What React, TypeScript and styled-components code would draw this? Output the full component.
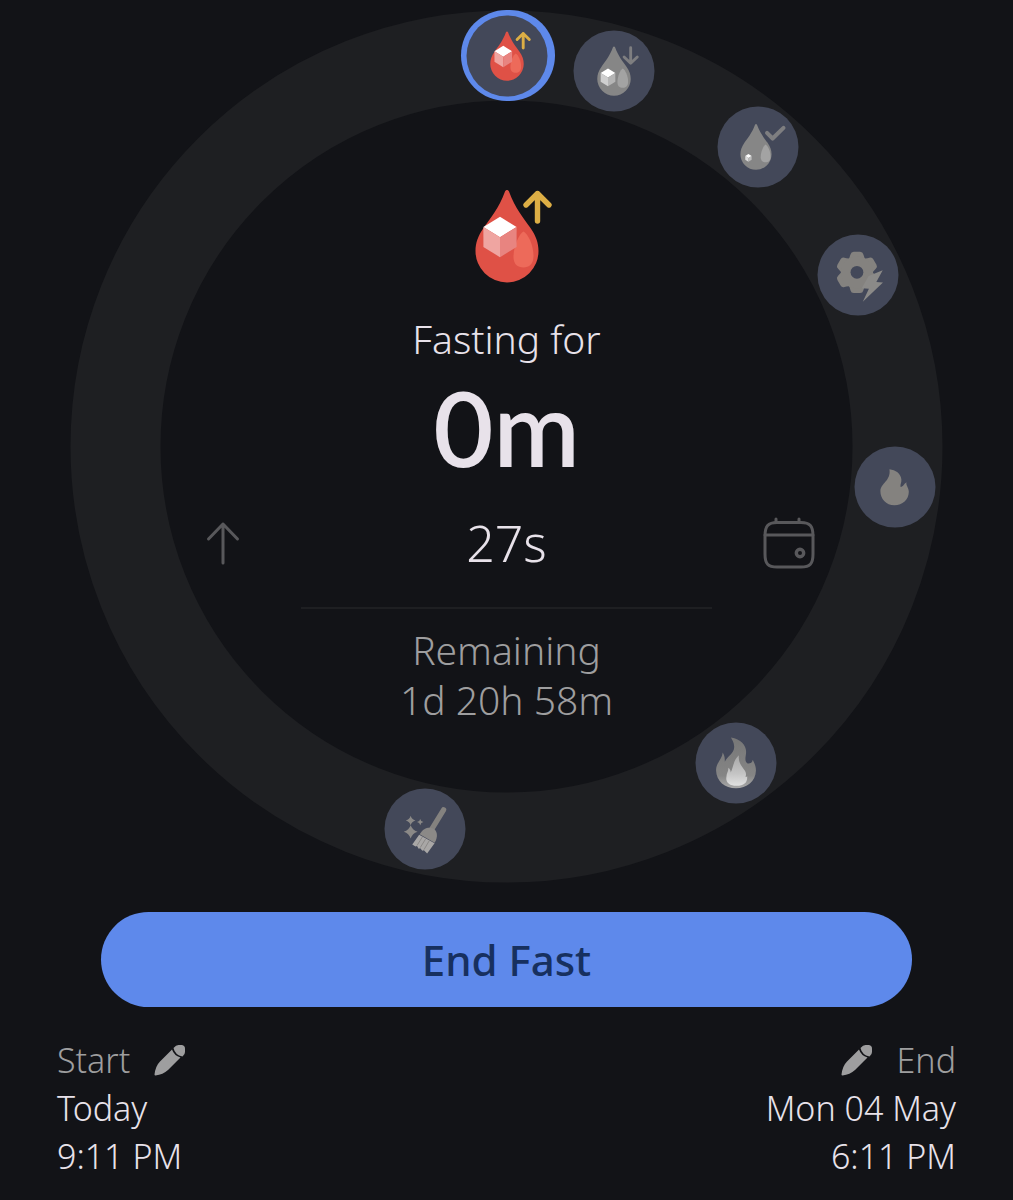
import React from "react";
import styled, { createGlobalStyle } from "styled-components";

const color = {
  page: "#121317",
  track: "#1e1f22",
  badge: "#434859",
  accent: "#5e89eb",
  onAccent: "#17305f",
  text: "#e8e2ea",
  muted: "#9e9e9f",
  faint: "#58585b",
  icon: "#858585",
};

const FAST_HOURS = 45;
const DIAL = 873;
const TRACK = 90;
const ORBIT = 391;

const GlobalStyle = createGlobalStyle`
  * { box-sizing: border-box; }
  body {
    margin: 0;
    background: ${color.page};
    color: ${color.text};
    font-family: "Noto Sans", "Open Sans", sans-serif;
    font-weight: 300;
  }
`;

const Page = styled.main`
  min-height: 100vh;
  padding: 10px 57px 18px;
  display: flex;
  flex-direction: column;
`;

const Dial = styled.section`
  position: relative;
  display: grid;
  margin: 0 13px;
  aspect-ratio: 1;
`;

const DialChart = styled.svg`
  grid-area: 1 / 1;
  width: 100%;
  height: 100%;
  overflow: visible;
`;

const Stages = styled.ol`
  margin: 0;
  padding: 0;
  list-style: none;
`;

const Stage = styled.li`
  position: absolute;
  transform: translate(-50%, -50%);
`;

const IconButton = styled.button`
  display: flex;
  align-items: center;
  justify-content: center;
  padding: 0;
  border: 0;
  background: none;
  color: ${color.muted};
  cursor: pointer;
`;

const StageButton = styled(IconButton)`
  width: 81px;
  height: 81px;
  border-radius: 50%;
  background: ${color.badge};
  color: ${color.icon};
`;

const Readout = styled.div`
  grid-area: 1 / 1;
  display: flex;
  flex-direction: column;
  align-items: center;
  padding-top: 178px;
`;

const Icon = styled.svg<{ $size: number }>`
  display: block;
  flex: none;
  width: ${(p) => p.$size}px;
  height: ${(p) => p.$size}px;
  overflow: visible;
`;

const Label = styled.p<{ $muted?: boolean }>`
  margin: 0;
  font-size: 39px;
  line-height: 50px;
  color: ${(p) => (p.$muted ? color.muted : color.text)};
`;

const Caption = styled(Label)`
  margin-top: 30px;
`;

const Elapsed = styled.p`
  margin: 11px 0 30px;
  font-family: Lato, "Noto Sans", sans-serif;
  font-size: 104px;
  line-height: 104px;
  font-weight: 600;
`;

const SecondsRow = styled.div`
  display: flex;
  align-items: center;
  justify-content: space-between;
  width: 630px;
  max-width: 72%;
  height: 68px;
`;

const SideButton = styled(IconButton)`
  width: 64px;
  height: 64px;
  color: ${color.faint};
`;

const Seconds = styled.span`
  font-size: 50px;
  line-height: 64px;
`;

const Divider = styled.hr`
  width: 47%;
  height: 2px;
  margin: 30px 0 16px;
  border: 0;
  background: ${color.track};
`;

const EndButton = styled.button`
  height: 95px;
  margin: 29px 44px;
  border: 0;
  border-radius: 48px;
  background: ${color.accent};
  color: ${color.onAccent};
  font-family: inherit;
  font-size: 42px;
  font-weight: 500;
  cursor: pointer;
`;

const Times = styled.footer`
  display: flex;
  justify-content: space-between;
  font-size: 34px;
  line-height: 48px;
`;

const TimeBlock = styled.div<{ $end?: boolean }>`
  display: flex;
  flex-direction: column;
  align-items: ${(p) => (p.$end ? "flex-end" : "flex-start")};
`;

const TimeHead = styled.div<{ $end?: boolean }>`
  display: flex;
  flex-direction: ${(p) => (p.$end ? "row-reverse" : "row")};
  align-items: center;
  gap: 24px;
  color: ${color.muted};
`;

const DROP =
  "M46 3.500C47 1.500 49 1.500 50 3.500C56 20 65 31 71.500 40C77 48 79.500 55 79.500 63A31.500 31.500 0 0 1 16.500 63C16.500 55 19 48 24.500 40C31 31 40 20 46 3.500Z";
const SHINE =
  "M64.500 43.500C69 46 74.500 57 74.500 68C74.500 76 70 79.500 64.500 79.500C58.500 79.500 54.500 76 54.500 69C54.500 58 60 46 64.500 43.500Z";

type CubeProps = { x: number; y: number; r: number; left: string; right: string };

function Cube({ x, y, r, left, right }: CubeProps) {
  const h = r * 0.62;
  const d = r * 1.2;
  return (
    <g>
      <path d={`M${x} ${y - h}L${x + r} ${y}L${x} ${y + h}L${x - r} ${y}Z`} fill="#fff" />
      <path d={`M${x - r} ${y}L${x} ${y + h}V${y + h + d}L${x - r} ${y + d}Z`} fill={left} />
      <path d={`M${x + r} ${y}L${x} ${y + h}V${y + h + d}L${x + r} ${y + d}Z`} fill={right} />
    </g>
  );
}

function SugarRising({ size }: { size: number }) {
  return (
    <Icon $size={size} viewBox="0 0 96 96" aria-hidden="true">
      <path d={DROP} fill="#df5146" />
      <path d={SHINE} fill="#ed6a5a" />
      <Cube x={41} y={39} r={16.6} left="#efa5a1" right="#e88480" />
      <path d="M78.500 33V5.500M67 17L78.500 5.500L90 17" fill="none" stroke="#dcae45" strokeWidth="5.400" strokeLinecap="round" strokeLinejoin="round" />
    </Icon>
  );
}

function SugarFalling() {
  return (
    <Icon $size={51} viewBox="0 0 96 96" aria-hidden="true">
      <path d={DROP} fill="#868686" />
      <path d={SHINE} fill="#a3a3a3" />
      <Cube x={36.7} y={51.8} r={13.8} left="#cfcfcf" right="#b5b5b5" />
      <path d="M79.400 4V33M67 21.500L79.400 33.500L91.800 21.500" fill="none" stroke="#7e7e80" strokeWidth="5.400" strokeLinecap="round" strokeLinejoin="round" />
    </Icon>
  );
}

function SugarSettled() {
  return (
    <Icon $size={51} viewBox="0 0 96 96" aria-hidden="true">
      <g transform="translate(-.4 3) scale(.93)">
        <path d={DROP} fill="#868686" />
        <path d={SHINE} fill="#a3a3a3" transform="translate(3 0)" />
      </g>
      <Cube x={30} y={65} r={6} left="#dcdcdc" right="#bdbdbd" />
      <path d="M65 21.500L75.500 32L96 12" fill="none" stroke="#7e7e80" strokeWidth="7.600" strokeLinecap="round" strokeLinejoin="round" />
    </Icon>
  );
}

function GearBolt() {
  return (
    <Icon $size={51} viewBox="0 0 96 96" aria-hidden="true">
      <g fill="#84827f">
        {[0, 60, 120, 180, 240, 300].map((a) => (
          <path key={a} d="M27 22Q33 16 34 9Q35 4 40 4H52Q57 4 58 9Q59 16 65 22Z" transform={`rotate(${a} 46 43)`} />
        ))}
        <circle cx="46" cy="43" r="30" />
      </g>
      <circle cx="46" cy="43" r="12" fill={color.badge} />
      <path d="M68 50L94.500 39L82.500 61L95 62L57 98.500L68.500 74L55 73Z" fill="#8b8a88" />
    </Icon>
  );
}

function SmallFlame() {
  return (
    <Icon $size={51} viewBox="0 0 96 96" aria-hidden="true">
      <path
        d="M37.500 14.500C49 16 59 22 60 34C60.500 40 57.500 43 58.500 48C64 47 65 42 69.500 39C68.500 46 74 49 74 57C74 72 62 82.500 47 82.500C31 82.500 20.500 70 20.500 56C20.500 41 41 36 37.500 14.500Z"
        fill="#84827f"
      />
    </Icon>
  );
}

function BigFlame() {
  return (
    <Icon $size={51} viewBox="0 0 96 96" aria-hidden="true">
      <defs>
        <linearGradient id="flame-core" x1="0" y1="0" x2="0" y2="1">
          <stop offset="0" stopColor="#a9a9a9" />
          <stop offset=".6" stopColor="#c4c4c4" />
          <stop offset="1" stopColor="#e2e2e2" />
        </linearGradient>
        <linearGradient id="flame-body" x1="0" y1="0" x2="0" y2="1">
          <stop offset="0" stopColor="#777777" />
          <stop offset=".75" stopColor="#858585" />
          <stop offset="1" stopColor="#aaaaaa" />
        </linearGradient>
      </defs>
      <path
        d="M38.500 0C57 3 67 14 67 27C67 36 63 43 69 48.500C75 50 79 47 79.500 42C83 49 85.500 54 85.500 62C85 83 68 95.500 48 95.500C27 95.500 11 82 10.500 62C10 48 22 41 23 28C27 34 27 40 27 45.500C32 35 46 29 44.500 16C44 9 41 5 38.500 0Z"
        fill="url(#flame-body)"
      />
      <path
        d="M53.500 33.500C52 45 57 52 63 60C68 66 67 70 66 74C67 75 68 74 69 73C70 84 64 91 49 91C35 91 28 84 30 74C30 67 34 64 33.500 57C37 60 38 62 38 66C43 57 43 42 53.500 33.500Z"
        fill="url(#flame-core)"
      />
    </Icon>
  );
}

function Broom() {
  return (
    <Icon $size={51} viewBox="0 0 96 96" aria-hidden="true">
      <path d="M83 12L59 51" stroke="#84827f" strokeWidth="10" strokeLinecap="round" />
      <path d="M38 58C46 43 59 44 65 48C71 52 73 63 66 74Z" fill="#8b8987" />
      <path d="M37 59L66 75L52 94L46 88L43 89L39 84L36 85L33 80L30 81L24 77Z" fill="#a9a7a6" />
      <path d="M43 63L33 79M49 67L39 83M56 70L46 87" stroke="#858381" strokeWidth="1.600" />
      <g fill="#8b8987">
        <path d="M21 41Q24 50 34 53Q24 56 21 66Q18 56 8 53Q18 50 21 41Z" />
        <path d="M21 23Q23 30 30 32Q23 34 21 41Q19 34 12 32Q19 30 21 23Z" />
        <path d="M39 29Q40 34 45 35Q40 36 39 41Q38 36 33 35Q38 34 39 29Z" />
      </g>
    </Icon>
  );
}

function ArrowUp() {
  return (
    <Icon $size={52} viewBox="0 0 52 52" fill="none" stroke="currentColor" strokeWidth="3" strokeLinecap="round" strokeLinejoin="round" aria-hidden="true">
      <path d="M25 46V7M10.500 22L25 7L39.500 22" />
    </Icon>
  );
}

function Calendar() {
  return (
    <Icon $size={52} viewBox="0 0 52 52" fill="none" stroke="currentColor" strokeWidth="3" strokeLinecap="round" aria-hidden="true">
      <path d="M2 19C2 9 5 5.500 14 5.500H38C47 5.500 50 9 50 19V37C50 47 47 50 38 50H14C5 50 2 47 2 37Z" />
      <path d="M2 18H50M13 2V5M36 2V5" />
      <circle cx="37" cy="36" r="3.700" strokeWidth="3.400" />
    </Icon>
  );
}

function Pencil() {
  return (
    <Icon $size={32} viewBox="0 0 32 32" fill="currentColor" aria-hidden="true">
      <path d="M18 5.500Q20 11.500 26.500 13.500L14 26Q9 30.500 1.500 31.500Q.5 31.500 .5 30.500Q1.500 22 6 17.500Z" />
      <path d="M19.500 4Q22 1 24.500 1H28Q31 1.500 31 4.500V8Q31 10.500 28.500 12.500Q21 11 19.500 4Z" />
    </Icon>
  );
}

const stages = [
  { hour: 0, name: "Blood sugar rises", icon: <SugarRising size={51} /> },
  { hour: 2, name: "Blood sugar falls", icon: <SugarFalling /> },
  { hour: 5, name: "Blood sugar settles", icon: <SugarSettled /> },
  { hour: 8, name: "Metabolism switches", icon: <GearBolt /> },
  { hour: 12, name: "Fat burning", icon: <SmallFlame /> },
  { hour: 18, name: "Ketosis", icon: <BigFlame /> },
  { hour: 24, name: "Autophagy", icon: <Broom /> },
];

function orbitPosition(hour: number) {
  const angle = (hour / FAST_HOURS) * 2 * Math.PI;
  const reach = (ORBIT / DIAL) * 100;
  return {
    left: `${50 + reach * Math.sin(angle)}%`,
    top: `${50 - reach * Math.cos(angle)}%`,
  };
}

export default function App() {
  const mid = DIAL / 2;
  return (
    <>
      <GlobalStyle />
      <Page>
        <Dial aria-label="Fasting progress">
          <DialChart viewBox={`0 0 ${DIAL} ${DIAL}`} aria-hidden="true">
            <circle cx={mid} cy={mid} r={ORBIT} fill="none" stroke={color.track} strokeWidth={TRACK} />
            <path
              d={`M${mid} ${mid - ORBIT}A${ORBIT} ${ORBIT} 0 0 1 ${mid + 3} ${mid - ORBIT}`}
              fill="none"
              stroke={color.accent}
              strokeWidth={TRACK + 1}
              strokeLinecap="round"
            />
          </DialChart>
          <Readout>
            <SugarRising size={96} />
            <Caption>Fasting for</Caption>
            <Elapsed>0m</Elapsed>
            <SecondsRow>
              <SideButton aria-label="Switch direction">
                <ArrowUp />
              </SideButton>
              <Seconds>27s</Seconds>
              <SideButton aria-label="Open calendar">
                <Calendar />
              </SideButton>
            </SecondsRow>
            <Divider />
            <Label $muted>Remaining</Label>
            <Label $muted>1d 20h 58m</Label>
          </Readout>
          <Stages>
            {stages.map((s) => (
              <Stage key={s.hour} style={orbitPosition(s.hour)}>
                <StageButton aria-label={s.name}>{s.icon}</StageButton>
              </Stage>
            ))}
          </Stages>
        </Dial>
        <EndButton>End Fast</EndButton>
        <Times>
          <TimeBlock>
            <TimeHead>
              <span>Start</span>
              <IconButton aria-label="Edit start">
                <Pencil />
              </IconButton>
            </TimeHead>
            <span>Today</span>
            <span>9:11 PM</span>
          </TimeBlock>
          <TimeBlock $end>
            <TimeHead $end>
              <span>End</span>
              <IconButton aria-label="Edit end">
                <Pencil />
              </IconButton>
            </TimeHead>
            <span>Mon 04 May</span>
            <span>6:11 PM</span>
          </TimeBlock>
        </Times>
      </Page>
    </>
  );
}
